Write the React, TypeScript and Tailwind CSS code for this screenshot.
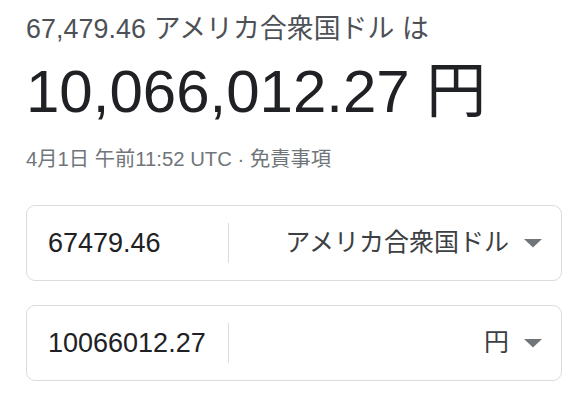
import { useState } from 'react';

const FONT = "font-['Liberation_Sans','Noto_Sans_CJK_JP',sans-serif]";

interface CurrencyRowProps {
  readonly amount: string;
  readonly currency: string;
}

/** Flecha de desplegable estilo Material. */
function DropArrow(): React.JSX.Element {
  return (
    <svg width="18" height="9" viewBox="0 0 18 9" aria-hidden="true" className="shrink-0">
      <path d="M0 0h18L9 8.5z" fill="#70757a" />
    </svg>
  );
}

function CurrencyRow({ amount, currency }: CurrencyRowProps): React.JSX.Element {
  const [value, setValue] = useState(amount);

  return (
    <div className="flex h-[76px] items-center rounded-[9px] border border-[#dadce0] bg-white pl-[21px] pr-[19px]">
      <input
        value={value}
        onChange={(event) => setValue(event.target.value)}
        className="w-[180px] bg-transparent text-[27px] text-[#202124] outline-none"
      />
      <div className="h-[40px] w-px bg-[#dadce0]" />
      <button
        type="button"
        className="ml-auto flex items-center gap-[15px] text-[25px] text-[#3c4043]"
      >
        <span>{currency}</span>
        <DropArrow />
      </button>
    </div>
  );
}

export default function App(): React.JSX.Element {
  return (
    <div className={`${FONT} min-h-[407px] bg-white pl-[26px] pr-[24px] pt-[13px]`}>
      <p className="text-[26.8px] leading-[32px] tracking-[0.1px] text-[#4d5156]">
        67,479.46 アメリカ合衆国ドル は
      </p>
      <p className="mt-[12px] text-[60px] leading-[70px] text-[#202124]">
        10,066,012.27 円
      </p>
      <p className="mt-[18px] text-[20.3px] leading-[28px] text-[#70757a]">
        4月1日 午前11:52 UTC · 免責事項
      </p>

      <div className="mt-[32px] flex flex-col gap-[24px]">
        <CurrencyRow amount="67479.46" currency="アメリカ合衆国ドル" />
        <CurrencyRow amount="10066012.27" currency="円" />
      </div>
    </div>
  );
}
